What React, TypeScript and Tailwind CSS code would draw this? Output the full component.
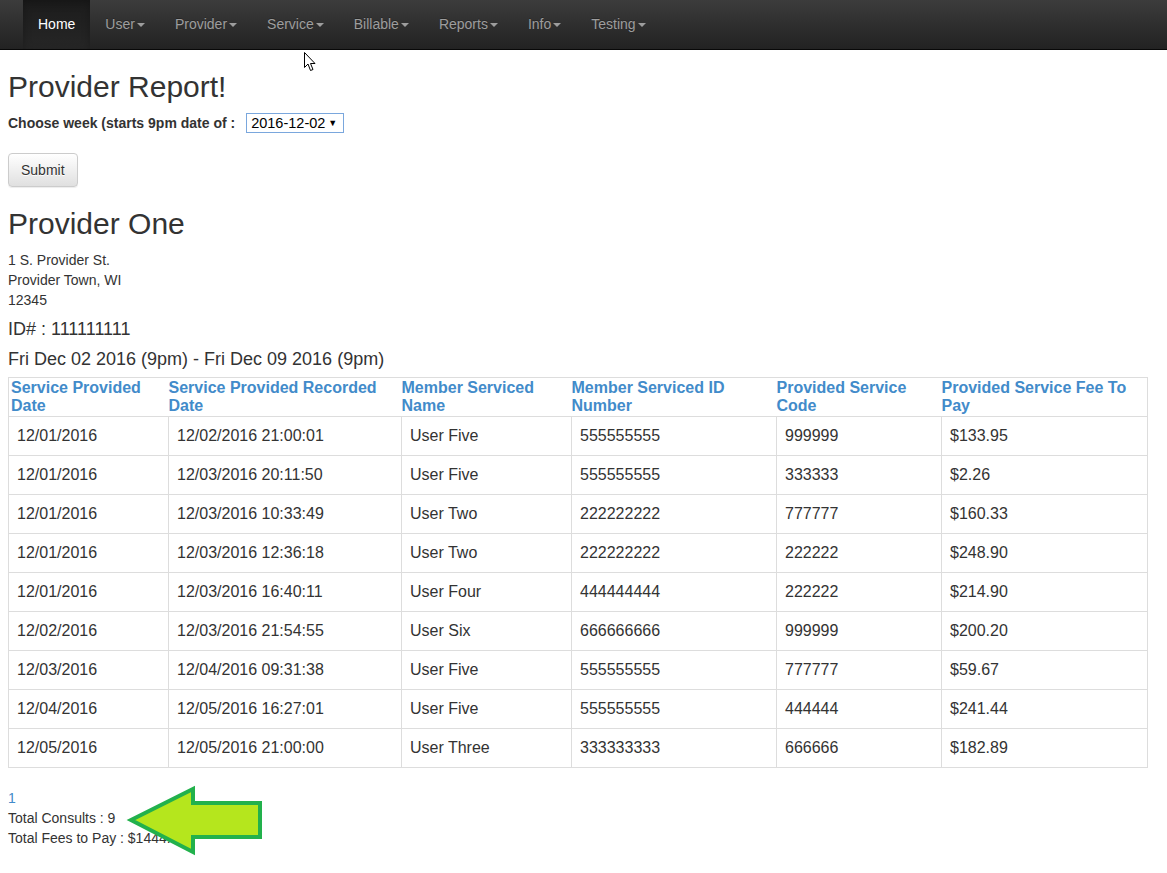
import React from "react";

const navItems = [
  { label: "Home", active: true },
  { label: "User" },
  { label: "Provider" },
  { label: "Service" },
  { label: "Billable" },
  { label: "Reports" },
  { label: "Info" },
  { label: "Testing" },
];

const rows = [
  ["12/01/2016", "12/02/2016 21:00:01", "User Five", "555555555", "999999", "$133.95"],
  ["12/01/2016", "12/03/2016 20:11:50", "User Five", "555555555", "333333", "$2.26"],
  ["12/01/2016", "12/03/2016 10:33:49", "User Two", "222222222", "777777", "$160.33"],
  ["12/01/2016", "12/03/2016 12:36:18", "User Two", "222222222", "222222", "$248.90"],
  ["12/01/2016", "12/03/2016 16:40:11", "User Four", "444444444", "222222", "$214.90"],
  ["12/02/2016", "12/03/2016 21:54:55", "User Six", "666666666", "999999", "$200.20"],
  ["12/03/2016", "12/04/2016 09:31:38", "User Five", "555555555", "777777", "$59.67"],
  ["12/04/2016", "12/05/2016 16:27:01", "User Five", "555555555", "444444", "$241.44"],
  ["12/05/2016", "12/05/2016 21:00:00", "User Three", "333333333", "666666", "$182.89"],
];

const headers = [
  "Service Provided Date",
  "Service Provided Recorded Date",
  "Member Serviced Name",
  "Member Serviced ID Number",
  "Provided Service Code",
  "Provided Service Fee To Pay",
];

const Caret = () => (
  <span className="ml-[2px] inline-block h-0 w-0 border-x-[4px] border-t-[4px] border-x-transparent border-t-[#9d9d9d] align-middle" />
);

const Navbar = () => (
  <nav className="h-[50px] border-b border-[#080808] bg-gradient-to-b from-[#3c3c3c] to-[#222222]">
    <ul className="flex h-full pl-[23px]">
      {navItems.map((item) => (
        <li
          key={item.label}
          className={
            item.active
              ? "flex h-full items-center bg-gradient-to-b from-[#1c1c1c] to-[#262626] px-[15px] text-[14px] text-white shadow-[inset_0_3px_9px_rgba(0,0,0,0.25)]"
              : "flex h-full items-center px-[15px] text-[14px] text-[#9d9d9d] [text-shadow:0_-1px_0_rgba(0,0,0,0.25)]"
          }
        >
          {item.label}
          {!item.active && <Caret />}
        </li>
      ))}
    </ul>
  </nav>
);

export default function App() {
  return (
    <div className="relative min-h-[873px] bg-white font-['Liberation_Sans',Arial,sans-serif] text-[#333]">
      <Navbar />

      <div className="px-[8px] pb-[20px]">
        <h2 className="mb-[10px] mt-[20px] text-[30px] leading-[1.1]">Provider Report!</h2>

        <div className="flex items-center text-[14px] font-bold leading-[20px]">
          <span>Choose week (starts 9pm date of :</span>
          <span className="ml-[11px] flex h-[20px] w-[98px] items-center justify-between border border-[#7aa7dd] bg-white pl-[4px] pr-[6px] text-[14.5px] font-normal text-black">
            <span>2016-12-02</span>
            <span className="text-[9px]">▼</span>
          </span>
        </div>

        <button className="mt-[20px] h-[34px] rounded-[4px] border border-[#ccc] bg-gradient-to-b from-white to-[#e0e0e0] px-[12px] text-[14px] text-[#333] shadow-[0_1px_1px_rgba(0,0,0,0.075)] [text-shadow:0_1px_0_#fff]">
          Submit
        </button>

        <h2 className="mb-[10px] mt-[20px] text-[30px] leading-[1.1]">Provider One</h2>

        <div className="text-[14px] leading-[20px]">
          <div>1 S. Provider St.</div>
          <div>Provider Town, WI</div>
          <div>12345</div>
        </div>

        <h4 className="my-[10px] text-[18px] leading-[1.1]">ID# : 111111111</h4>
        <h4 className="mb-[7px] mt-[8px] text-[18px] leading-[1.1]">
          Fri Dec 02 2016 (9pm) - Fri Dec 09 2016 (9pm)
        </h4>

        <table className="w-[1139px] table-fixed border-collapse border border-[#ddd]">
          <colgroup>
            <col className="w-[160px]" />
            <col className="w-[233px]" />
            <col className="w-[170px]" />
            <col className="w-[205px]" />
            <col className="w-[165px]" />
            <col className="w-[206px]" />
          </colgroup>
          <thead>
            <tr className="border-b border-[#ddd]">
              {headers.map((h, i) => (
                <th
                  key={h}
                  className={`pb-[1px] pt-[1px] text-left align-bottom text-[16px] font-bold leading-[18px] text-[#428bca] ${
                    i === 0 ? "pl-[2px]" : "pl-0"
                  }`}
                >
                  {h}
                </th>
              ))}
            </tr>
          </thead>
          <tbody>
            {rows.map((r, ri) => (
              <tr key={ri}>
                {r.map((c, ci) => (
                  <td key={ci} className="h-[39px] border border-[#ddd] px-[8px] text-[16px] leading-[22px]">
                    {c}
                  </td>
                ))}
              </tr>
            ))}
          </tbody>
        </table>

        <div className="mt-[20px] text-[14px] leading-[20px]">
          <div className="text-[#428bca]">1</div>
          <div>Total Consults : 9</div>
          <div>Total Fees to Pay : $1444.54</div>
        </div>
      </div>

      {/* green annotation arrow */}
      <svg className="pointer-events-none absolute left-0 top-0" width="1167" height="873">
        <polygon
          points="131,820 193,789 193,803 260,803 260,837 193,837 193,852"
          fill="#b5e61d"
          stroke="#22b14c"
          strokeWidth="4"
          strokeLinejoin="miter"
        />
      </svg>

      {/* mouse cursor */}
      <svg className="pointer-events-none absolute left-[304px] top-[52px]" width="13" height="20" viewBox="0 0 13 20">
        <path d="M0.5,0.5 L0.5,15.5 L4,12 L6.5,18.5 L9,17.5 L6.5,11.5 L11,11.5 Z" fill="#fff" stroke="#000" strokeWidth="1" />
      </svg>
    </div>
  );
}
